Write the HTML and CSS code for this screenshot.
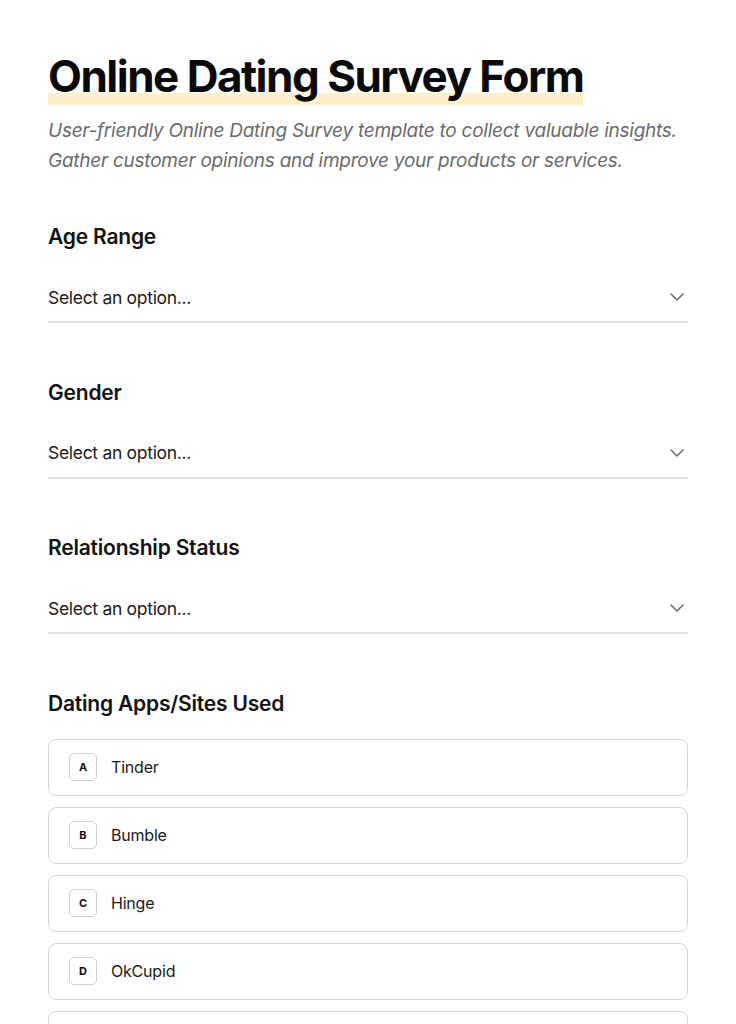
FILE: index.html
```html
<!DOCTYPE html>
<html lang="en">
<head>
<meta charset="utf-8">
<title>Online Dating Survey Form</title>
<link rel="stylesheet" href="styles.css">
</head>
<body>
<main class="page">
  <header class="intro">
    <h1 class="title"><span class="title-mark">Online Dating Survey Form</span></h1>
    <p class="subtitle">User-friendly Online Dating Survey template to collect valuable insights. Gather customer opinions and improve your products or services.</p>
  </header>

  <section class="field">
    <h2 class="field-label">Age Range</h2>
    <div class="select">
      <span class="select-text">Select an option...</span>
      <svg class="chevron" width="14" height="8" viewBox="0 0 14 8"><path d="M1 1l6 6 6-6" fill="none" stroke="#6b6b6b" stroke-width="1.5" stroke-linecap="round" stroke-linejoin="round"/></svg>
    </div>
  </section>

  <section class="field">
    <h2 class="field-label">Gender</h2>
    <div class="select">
      <span class="select-text">Select an option...</span>
      <svg class="chevron" width="14" height="8" viewBox="0 0 14 8"><path d="M1 1l6 6 6-6" fill="none" stroke="#6b6b6b" stroke-width="1.5" stroke-linecap="round" stroke-linejoin="round"/></svg>
    </div>
  </section>

  <section class="field">
    <h2 class="field-label">Relationship Status</h2>
    <div class="select">
      <span class="select-text">Select an option...</span>
      <svg class="chevron" width="14" height="8" viewBox="0 0 14 8"><path d="M1 1l6 6 6-6" fill="none" stroke="#6b6b6b" stroke-width="1.5" stroke-linecap="round" stroke-linejoin="round"/></svg>
    </div>
  </section>

  <section class="field">
    <h2 class="field-label">Dating Apps/Sites Used</h2>
    <div class="options">
      <div class="option"><span class="key">A</span><span class="option-text">Tinder</span></div>
      <div class="option"><span class="key">B</span><span class="option-text">Bumble</span></div>
      <div class="option"><span class="key">C</span><span class="option-text">Hinge</span></div>
      <div class="option"><span class="key">D</span><span class="option-text">OkCupid</span></div>
      <div class="option"><span class="key">E</span><span class="option-text">Match</span></div>
    </div>
  </section>
</main>
</body>
</html>
```

FILE: styles.css
```css
* { box-sizing: border-box; }
html, body { margin: 0; padding: 0; background: #ffffff; }
body {
  font-family: "Inter", "Liberation Sans", sans-serif;
  color: #111111;
}
.page {
  padding: 50px 48px 0;
}
.intro { margin-bottom: 46px; }
.title {
  margin: 0;
  font-size: 44px;
  line-height: 53px;
  font-weight: 700;
  letter-spacing: -1.5px;
  color: #0a0a0a;
}
.title-mark {
  display: inline-block;
  line-height: 53px;
  padding-bottom: 2px;
  box-shadow: inset 0 -12px 0 #fdf0c9;
}
.subtitle {
  margin: 11px 0 0;
  font-size: 19px;
  line-height: 30px;
  font-style: italic;
  font-weight: 400;
  color: #6a6a6a;
  letter-spacing: -0.25px;
}
.field { margin-bottom: 54.5px; }
.field-label {
  margin: 0;
  font-size: 21px;
  line-height: 30px;
  font-weight: 600;
  letter-spacing: -0.2px;
  color: #111111;
}
.select {
  margin-top: 29px;
  display: flex;
  align-items: center;
  justify-content: space-between;
  height: 42px;
  padding: 0 4px 8px 0;
  border-bottom: 2px solid #e3e3e3;
}
.select-text {
  font-size: 17.5px;
  letter-spacing: -0.3px;
  color: #1a1a1a;
}
.chevron { display: block; }
.options {
  margin-top: 20px;
  display: flex;
  flex-direction: column;
  gap: 11px;
}
.option {
  display: flex;
  align-items: center;
  gap: 14px;
  height: 57px;
  padding: 0 20px;
  border: 1px solid #d6d6d6;
  border-radius: 8px;
  background: #fff;
}
.key {
  width: 28px;
  height: 28px;
  display: flex;
  align-items: center;
  justify-content: center;
  border: 1px solid #cfcfcf;
  border-radius: 5px;
  font-size: 11px;
  font-weight: 700;
  color: #111;
}
.option-text {
  font-size: 16px;
  color: #1a1a1a;
  letter-spacing: -0.2px;
}
```
